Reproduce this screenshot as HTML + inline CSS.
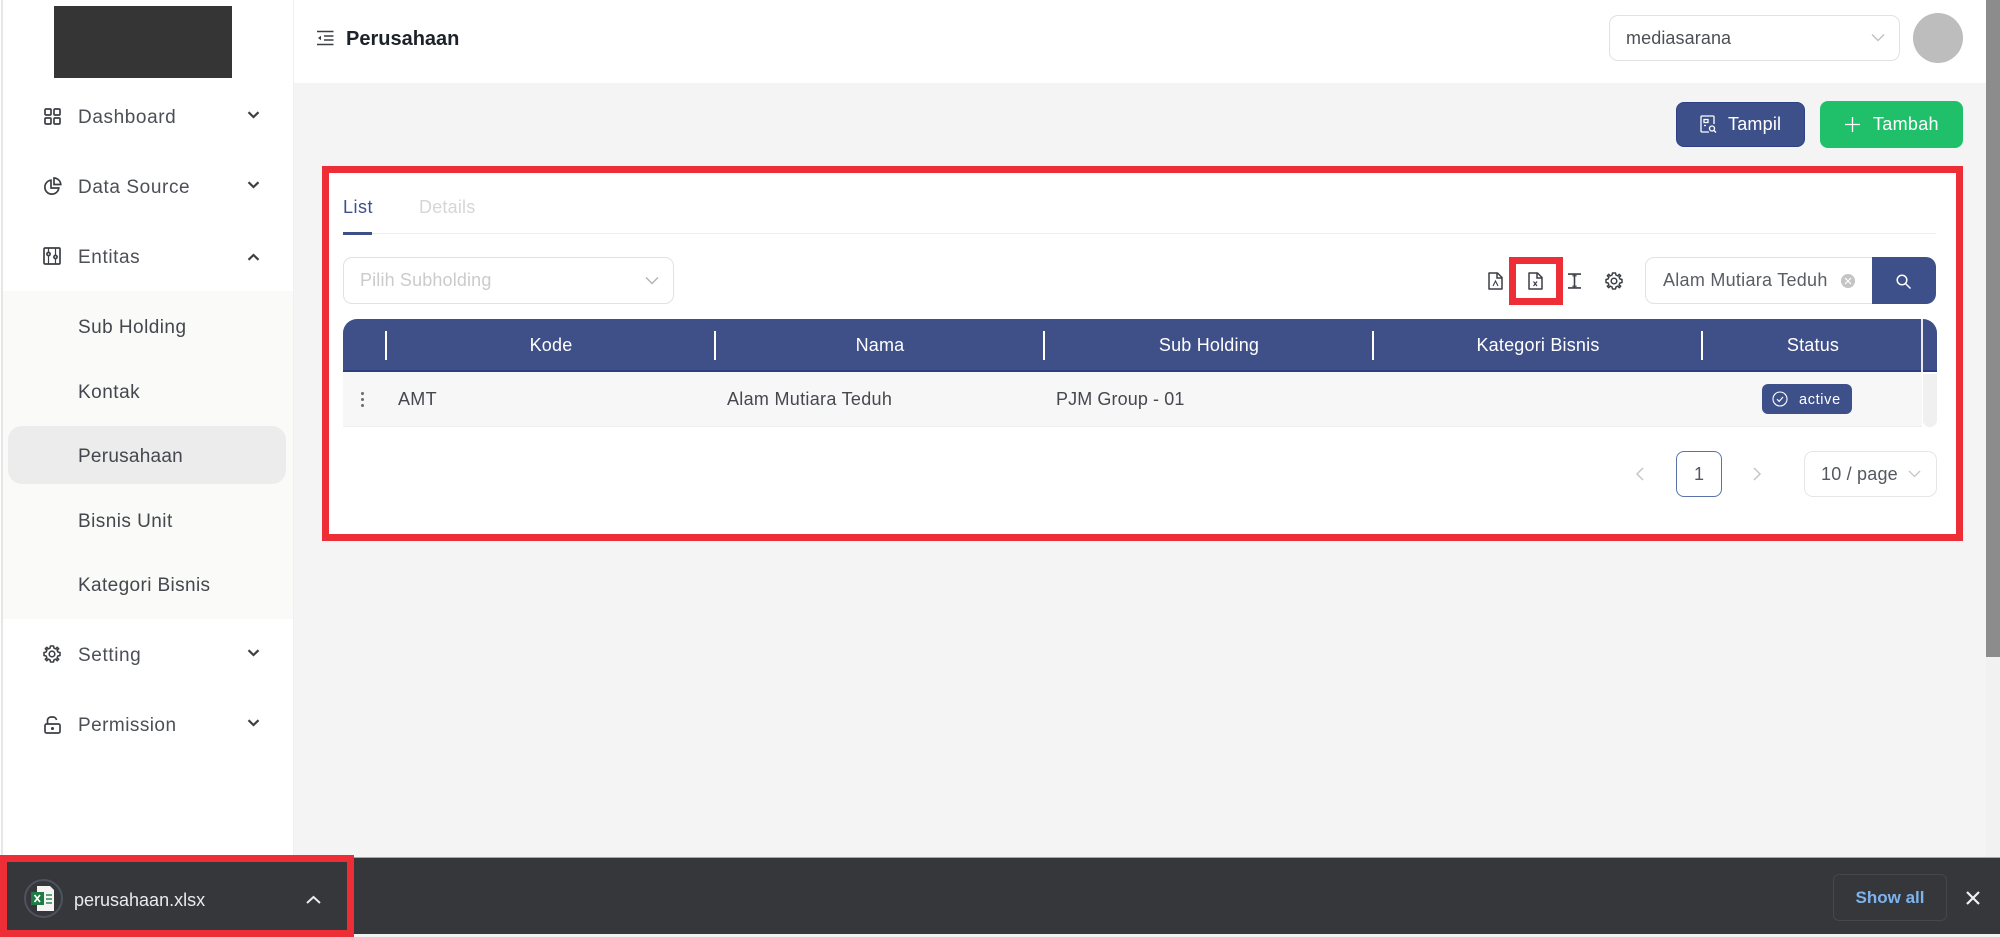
<!DOCTYPE html>
<html lang="id">
<head>
<meta charset="utf-8">
<title>Perusahaan</title>
<style>
html,body{margin:0;padding:0;width:2000px;height:937px;overflow:hidden;background:#fff;font-family:"Liberation Sans",Arial,sans-serif;}
#r{position:absolute;left:0;top:0;width:2000px;height:937px;overflow:hidden;filter:blur(.35px);}
.a{position:absolute;box-sizing:border-box;}
.t{position:absolute;white-space:nowrap;line-height:30px;height:30px;}
svg{position:absolute;overflow:visible;fill:none;}
.m{font-size:19px;letter-spacing:.6px;color:#4c4f55;left:78px;}
.s{font-size:19px;letter-spacing:.4px;color:#44474d;left:78px;}
.h{font-size:18px;letter-spacing:.2px;color:#fff;text-align:center;width:320px;}
.c{font-size:18px;letter-spacing:.3px;color:#45484e;}
</style>
</head>
<body>
<div id="r">
<!-- sidebar -->
<div class="a" style="left:1px;top:0;width:2px;height:860px;background:#e6e6e6"></div>
<div class="a" style="left:293px;top:0;width:1px;height:860px;background:#f0f0f0"></div>
<div class="a" style="left:54px;top:6px;width:178px;height:72px;background:#353535"></div>

<svg style="left:44px;top:108px" width="17" height="17" viewBox="0 0 17 17" stroke="#3c3f45" stroke-width="1.7"><rect x="1" y="1" width="6" height="6" rx="1"/><rect x="10" y="1" width="6" height="6" rx="1"/><rect x="1" y="10" width="6" height="6" rx="1"/><rect x="10" y="10" width="6" height="6" rx="1"/></svg>
<div class="t m" style="top:103px">Dashboard</div>
<svg style="left:247px;top:111px" width="13" height="8" viewBox="0 0 13 8" stroke="#3c3f45" stroke-width="2.2"><path d="M1.5 1.2 6.5 6l5-4.800"/></svg>

<svg style="left:43px;top:177px" width="19" height="19" viewBox="0 0 19 19" stroke="#3c3f45" stroke-width="1.7"><path d="M8 3.200a7 7 0 1 0 7.800 7.800H8z"/><path d="M11 1v6.500h6.800A7 7 0 0 0 11 1z"/></svg>
<div class="t m" style="top:173px">Data Source</div>
<svg style="left:247px;top:181px" width="13" height="8" viewBox="0 0 13 8" stroke="#3c3f45" stroke-width="2.2"><path d="M1.5 1.2 6.5 6l5-4.800"/></svg>

<svg style="left:43px;top:247px" width="18" height="18" viewBox="0 0 18 18" stroke="#3c3f45" stroke-width="1.7"><rect x="1" y="1" width="16" height="16" rx="1"/><path d="M5.500 1v4M5.500 9v8M12.500 1v7M12.500 12v5" stroke-width="1.200"/><circle cx="5.500" cy="7" r="1.600"/><circle cx="12.500" cy="10" r="1.600"/></svg>
<div class="t m" style="top:243px">Entitas</div>
<svg style="left:247px;top:253px" width="13" height="8" viewBox="0 0 13 8" stroke="#3c3f45" stroke-width="2.2"><path d="M1.5 6.800 6.500 2l5 4.800"/></svg>

<div class="a" style="left:3px;top:291px;width:290px;height:328px;background:#fafaf9"></div>
<div class="a" style="left:8px;top:426px;width:278px;height:58px;background:#ececec;border-radius:14px"></div>
<div class="t s" style="top:313px;letter-spacing:.45px">Sub Holding</div>
<div class="t s" style="top:378px;letter-spacing:.5px">Kontak</div>
<div class="t s" style="top:442px;letter-spacing:.25px">Perusahaan</div>
<div class="t s" style="top:507px;letter-spacing:.45px">Bisnis Unit</div>
<div class="t s" style="top:571px;letter-spacing:.38px">Kategori Bisnis</div>

<svg style="left:43px;top:645px" width="18" height="18" viewBox="0 0 18 18" stroke="#3c3f45" stroke-width="1.600"><polygon stroke-linejoin="round" points="7.500,1 10.500,1 11,3.100 12.900,3.900 14.200,2.300 15.700,3.800 14.100,5.100 14.900,7 17,7.500 17,10.500 14.900,11 14.100,12.900 15.700,14.200 14.200,15.700 12.900,14.100 11,14.900 10.500,17 7.500,17 7,14.900 5.100,14.100 3.800,15.700 2.300,14.200 3.900,12.900 3.100,11 1,10.500 1,7.500 3.100,7 3.900,5.100 2.300,3.800 3.800,2.300 5.100,3.900 7,3.100"/><circle cx="9" cy="9" r="2.800"/></svg>
<div class="t m" style="top:641px;letter-spacing:.6px">Setting</div>
<svg style="left:247px;top:649px" width="13" height="8" viewBox="0 0 13 8" stroke="#3c3f45" stroke-width="2.2"><path d="M1.5 1.2 6.5 6l5-4.800"/></svg>

<svg style="left:44px;top:716px" width="17" height="18" viewBox="0 0 17 18" stroke="#3c3f45" stroke-width="1.7"><rect x="1" y="8" width="15" height="9" rx="1.500"/><path d="M3.500 8V4.500A3.500 3.500 0 0 1 7 1h2a3.500 3.500 0 0 1 3.500 3"/><circle cx="8.500" cy="12.500" r=".7" fill="#3c3f45"/></svg>
<div class="t m" style="top:711px;letter-spacing:.45px">Permission</div>
<svg style="left:247px;top:719px" width="13" height="8" viewBox="0 0 13 8" stroke="#3c3f45" stroke-width="2.2"><path d="M1.5 1.2 6.500 6l5-4.800"/></svg>

<!-- content bg -->
<div class="a" style="left:294px;top:83px;width:1692px;height:775px;background:#f4f4f4"></div>

<!-- header -->
<svg style="left:317px;top:30px" width="17" height="16" viewBox="0 0 17 16" stroke="#3c3f45" stroke-width="1.5"><path d="M0 1.500h16.500M7 6h9.500M7 10h9.500M0 14.500h16.500"/><path d="M4 5.700 1 8l3 2.300z" fill="#3c3f45" stroke="none"/></svg>
<div class="t" style="left:346px;top:24px;font-size:20px;font-weight:bold;color:#1d2129">Perusahaan</div>
<div class="a" style="left:1609px;top:15px;width:291px;height:46px;border:1.500px solid #e2e2e2;border-radius:9px;background:#fff"></div>
<div class="t" style="left:1626px;top:23px;font-size:18px;letter-spacing:.1px;color:#4c4f55">mediasarana</div>
<svg style="left:1871px;top:33px" width="14" height="9" viewBox="0 0 14 9" stroke="#c0c0c0" stroke-width="1.400"><path d="M1 1.500 7 7.500l6-6"/></svg>
<div class="a" style="left:1913px;top:13px;width:50px;height:50px;border-radius:50%;background:#bdbdbe"></div>

<!-- action buttons -->
<div class="a" style="left:1676px;top:102px;width:129px;height:45px;background:#3e5089;border:1.500px solid #2c4285;border-radius:8px"></div>
<svg style="left:1700px;top:115px" width="17" height="19" viewBox="0 0 17 19" stroke="#fff" stroke-width="1.300"><path d="M9 17H2a1 1 0 0 1-1-1V2a1 1 0 0 1 1-1h11a1 1 0 0 1 1 1v7"/><path d="M4 4.500h4v3H4zM4 10.500h2"/><circle cx="12" cy="13.500" r="2.500"/><path d="m14 15.500 2 2"/></svg>
<div class="t" style="left:1728px;top:109px;font-size:18px;letter-spacing:.2px;font-weight:500;color:#fff">Tampil</div>
<div class="a" style="left:1820px;top:101px;width:143px;height:47px;background:#20c06b;border-radius:8px"></div>
<svg style="left:1845px;top:117px" width="15" height="15" viewBox="0 0 15 15" stroke="#fff" stroke-width="1.300"><path d="M7.500 0v15M0 7.500h15"/></svg>
<div class="t" style="left:1873px;top:109px;font-size:18px;letter-spacing:.3px;color:#fff">Tambah</div>

<!-- main card -->
<div class="a" style="left:322px;top:166px;width:1641px;height:375px;background:#fff;border:7px solid #ee2e37"></div>

<div class="t" style="left:343px;top:192px;font-size:18px;font-weight:500;letter-spacing:.5px;color:#3e5089">List</div>
<div class="t" style="left:419px;top:192px;font-size:18px;letter-spacing:.2px;color:#d6d6d6">Details</div>
<div class="a" style="left:343px;top:233px;width:1593px;height:1px;background:#ededed"></div>
<div class="a" style="left:343px;top:232px;width:29px;height:2.500px;background:#3e5089"></div>

<div class="a" style="left:343px;top:257px;width:331px;height:47px;border:1.500px solid #e2e2e2;border-radius:9px;background:#fff"></div>
<div class="t" style="left:360px;top:265px;font-size:18px;letter-spacing:.15px;color:#cbcbcb">Pilih Subholding</div>
<svg style="left:645px;top:276px" width="14" height="9" viewBox="0 0 14 9" stroke="#b4b4b4" stroke-width="1.500"><path d="M1 1.500 7 7.500l6-6"/></svg>

<!-- toolbar icons -->
<svg style="left:1488px;top:272px" width="15" height="18" viewBox="0 0 15 18" stroke="#3c3f45" stroke-width="1.500"><path d="M1 1h8.500L14 5.500V17H1z" stroke-linejoin="round"/><path d="M9 1v5h5"/><path d="M5 14l2.500-5L10 14" stroke-width="1.100"/></svg>
<svg style="left:1528px;top:272px" width="15" height="18" viewBox="0 0 15 18" stroke="#3c3f45" stroke-width="1.500"><path d="M1 1h8.500L14 5.500V17H1z" stroke-linejoin="round"/><path d="M9 1v5h5"/><path d="M5.500 9.500 9 14M9 9.500 5.500 14" stroke-width="1.200"/></svg>
<svg style="left:1568px;top:273px" width="13" height="16" viewBox="0 0 15 18" stroke="#3c3f45" stroke-width="1.800"><path d="M0 1h15M0 17h15M7.500 2v14"/><path d="M5 3h5M5 15h5" stroke-width="1.400"/></svg>
<svg style="left:1605px;top:272px" width="18" height="18" viewBox="0 0 18 18" stroke="#3c3f45" stroke-width="1.500"><polygon stroke-linejoin="round" points="7.500,1 10.500,1 11,3.100 12.900,3.900 14.200,2.300 15.700,3.800 14.100,5.100 14.900,7 17,7.500 17,10.500 14.900,11 14.100,12.900 15.700,14.200 14.200,15.700 12.900,14.100 11,14.900 10.500,17 7.500,17 7,14.900 5.100,14.100 3.800,15.700 2.300,14.200 3.900,12.900 3.100,11 1,10.500 1,7.500 3.100,7 3.900,5.100 2.300,3.800 3.800,2.300 5.100,3.900 7,3.100"/><circle cx="9" cy="9" r="2.800"/></svg>
<div class="a" style="left:1509px;top:257px;width:54px;height:48px;border:7px solid #ee2e37"></div>

<!-- search -->
<div class="a" style="left:1645px;top:257px;width:232px;height:47px;border:1.500px solid #e2e2e2;border-radius:9px 0 0 9px;background:#fff"></div>
<div class="t" style="left:1663px;top:265px;font-size:18px;letter-spacing:.27px;color:#5a5d63">Alam Mutiara Teduh</div>
<div class="a" style="left:1841px;top:274px;width:14px;height:14px;border-radius:50%;background:#c4c4c4"></div>
<svg style="left:1845px;top:278px" width="6" height="6" viewBox="0 0 6 6" stroke="#fff" stroke-width="1.200"><path d="M0 0l6 6M6 0 0 6"/></svg>
<div class="a" style="left:1872px;top:257px;width:64px;height:47px;background:#3e5089;border-radius:0 10px 10px 0"></div>
<svg style="left:1896px;top:274px" width="15" height="15" viewBox="0 0 15 15" stroke="#fff" stroke-width="1.500"><circle cx="6" cy="6" r="4.800"/><path d="m9.500 9.500 5 5"/></svg>

<!-- table -->
<div class="a" style="left:343px;top:319px;width:1594px;height:53px;background:#3f5088;border-radius:14px 14px 0 0;border-bottom:2px solid #2a4080"></div>
<div class="a" style="left:385px;top:331px;width:2px;height:29px;background:#fff"></div>
<div class="a" style="left:714px;top:331px;width:2px;height:29px;background:#fff"></div>
<div class="a" style="left:1043px;top:331px;width:2px;height:29px;background:#fff"></div>
<div class="a" style="left:1372px;top:331px;width:2px;height:29px;background:#fff"></div>
<div class="a" style="left:1701px;top:331px;width:2px;height:29px;background:#fff"></div>
<div class="a" style="left:1921px;top:319px;width:2px;height:53px;background:#e8e8ee"></div>
<div class="t h" style="left:391px;top:330px">Kode</div>
<div class="t h" style="left:720px;top:330px">Nama</div>
<div class="t h" style="left:1049px;top:330px">Sub Holding</div>
<div class="t h" style="left:1378px;top:330px">Kategori Bisnis</div>
<div class="t h" style="left:1653px;top:330px">Status</div>

<div class="a" style="left:343px;top:372px;width:1579px;height:55px;background:#f7f7f7;border-bottom:1px solid #f0f0f0"></div>
<div class="a" style="left:1923px;top:374px;width:14px;height:53px;background:#f0f0f0;border-radius:0 0 7px 7px"></div>
<div class="a" style="left:361px;top:392px;width:3px;height:3px;border-radius:50%;background:#6b6b6b"></div>
<div class="a" style="left:361px;top:398px;width:3px;height:3px;border-radius:50%;background:#6b6b6b"></div>
<div class="a" style="left:361px;top:404px;width:3px;height:3px;border-radius:50%;background:#6b6b6b"></div>
<div class="t c" style="left:398px;top:384px">AMT</div>
<div class="t c" style="left:727px;top:384px">Alam Mutiara Teduh</div>
<div class="t c" style="left:1056px;top:384px;letter-spacing:.1px">PJM Group - 01</div>
<div class="a" style="left:1762px;top:384px;width:90px;height:30px;background:#3e5089;border-radius:6px"></div>
<svg style="left:1772px;top:391px" width="16" height="16" viewBox="0 0 16 16" stroke="#fff" stroke-width="1.100"><circle cx="8" cy="8" r="7"/><path d="m5 8.200 2.200 2.200L11 6"/></svg>
<div class="t" style="left:1799px;top:385px;font-size:14.500px;letter-spacing:.65px;color:#fff">active</div>

<!-- pagination -->
<svg style="left:1635px;top:467px" width="9" height="14" viewBox="0 0 9 14" stroke="#c6c6c6" stroke-width="1.500"><path d="M8 1 2 7l6 6"/></svg>
<div class="a" style="left:1676px;top:451px;width:46px;height:46px;border:1.500px solid #5a73ab;border-radius:8px"></div>
<div class="t" style="left:1676px;top:459px;width:46px;text-align:center;font-size:18px;color:#55585e">1</div>
<svg style="left:1753px;top:467px" width="9" height="14" viewBox="0 0 9 14" stroke="#c6c6c6" stroke-width="1.500"><path d="m1 1 6 6-6 6"/></svg>
<div class="a" style="left:1804px;top:451px;width:133px;height:46px;border:1.500px solid #e6e6e6;border-radius:9px"></div>
<div class="t" style="left:1821px;top:459px;font-size:18px;letter-spacing:.2px;color:#55585e">10 / page</div>
<svg style="left:1908px;top:470px" width="13" height="8" viewBox="0 0 13 8" stroke="#c6c6c6" stroke-width="1.300"><path d="m1 1 5.500 5.500L12 1"/></svg>

<!-- scrollbar -->
<div class="a" style="left:1986px;top:0;width:14px;height:857px;background:#f1f1f1"></div>
<div class="a" style="left:1986px;top:0;width:14px;height:657px;background:#8c8c8c"></div>

<!-- download bar -->
<div class="a" style="left:0;top:857px;width:2000px;height:77px;background:#36373b;border-top:1px solid #a8a8a8"></div>
<div class="a" style="left:0;top:934px;width:2000px;height:3px;background:#f2f2f2"></div>
<div class="a" style="left:0;top:855px;width:354px;height:82px;border:7px solid #ee2e37"></div>
<div class="a" style="left:24px;top:879px;width:39px;height:39px;border:2px solid #4d5261;border-radius:50%"></div>
<svg style="left:31px;top:885px" width="24" height="27" viewBox="0 0 24 27"><path d="M6 1h13l4 4v21H6z" fill="#f4f4f4"/><rect x="0" y="7" width="13" height="13" fill="#1f7a45"/><path d="M3.500 10l5.500 7M9 10l-5.500 7" stroke="#fff" stroke-width="1.700"/><path d="M15 10h6M15 14h6M15 18h6" stroke="#2a8a50" stroke-width="1.500"/></svg>
<div class="t" style="left:74px;top:885px;font-size:18px;color:#e8eaed">perusahaan.xlsx</div>
<svg style="left:306px;top:895px" width="15" height="9" viewBox="0 0 15 9" stroke="#e8eaed" stroke-width="2"><path d="M1 8l6.500-6L14 8"/></svg>
<div class="a" style="left:1833px;top:874px;width:114px;height:47px;border:1px solid #46474b;border-radius:6px"></div>
<div class="t" style="left:1833px;top:883px;width:114px;text-align:center;font-size:17px;font-weight:bold;color:#7db3ee">Show all</div>
<svg style="left:1966px;top:891px" width="14" height="14" viewBox="0 0 14 14" stroke="#f1f1f1" stroke-width="2.200"><path d="M1 1l12 12M13 1 1 13"/></svg>
</div>
</body>
</html>
